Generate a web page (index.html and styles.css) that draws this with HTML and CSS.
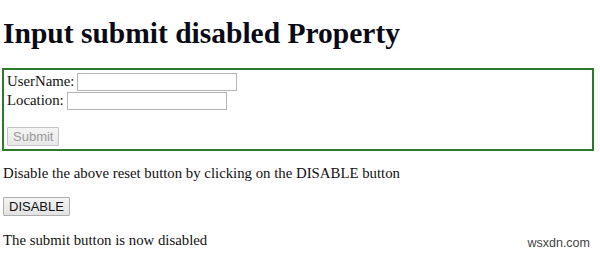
FILE: index.html
```html
<!DOCTYPE html>
<html>
<head>
<meta charset="utf-8">
<link rel="stylesheet" href="styles.css">
</head>
<body>
<h1 class="title">Input submit disabled Property</h1>
<form class="box">
  <div class="row">UserName: <input class="field" type="text"></div>
  <div class="row">Location: <input class="field" type="text"></div>
  <div class="gap"></div>
  <input class="btn btn-disabled" type="submit" value="Submit" disabled>
</form>
<p class="text">Disable the above reset button by clicking on the DISABLE button</p>
<button class="btn" type="button">DISABLE</button>
<p class="text result">The submit button is now disabled</p>
<div class="mark">wsxdn.com</div>
</body>
</html>
```
FILE: styles.css
```css
html {
  margin: 0;
  height: 254px;
  overflow: hidden;
  background: #fff;
}
body {
  margin: 0;
  padding: 0 3px;
  font-family: "Liberation Serif", "Times New Roman", serif;
  font-size: 14.8px;
  color: #111;
  position: relative;
  height: 254px;
  box-sizing: border-box;
  overflow: hidden;
}
.title {
  font-size: 29.5px;
  font-weight: bold;
  margin: 0;
  padding-top: 15px;
  line-height: 36px;
  height: 53px;
  color: #0a0a14;
}
.box {
  border: 2px solid #2c7a2c;
  width: 585px;
  height: 77px;
  margin: 0 0 0 -1px;
  padding: 2px 0 0 3px;
  box-sizing: content-box;
  display: flex;
  flex-direction: column;
  align-items: flex-start;
}
.row {
  height: 19px;
  display: flex;
  align-items: center;
  line-height: 19px;
}
.field {
  width: 154px;
  height: 14px;
  margin: 0 0 0 3px;
  padding: 1px 2px;
  border: 1px solid #b5b5b5;
  background: #fff;
  font-size: 13px;
}
.gap {
  height: 17px;
}
.btn {
  font-family: "Liberation Sans", Arial, sans-serif;
  font-size: 13px;
  height: 19px;
  padding: 0 5px;
  border: 1px solid #adadad;
  border-radius: 1px;
  background: linear-gradient(#f4f4f4, #e2e2e2);
  color: #111;
  line-height: 17px;
}
.btn-disabled {
  color: #9a9a9a;
  border-color: #c4c4c4;
  background: linear-gradient(#f4f4f4, #e8e8e8);
  padding: 0 5px;
}
.text {
  margin: 13px 0 14px 0;
  line-height: 19px;
}
.result {
  margin-top: 15px;
}
.mark {
  position: absolute;
  right: 10px;
  bottom: 4px;
  font-family: "Liberation Sans", Arial, sans-serif;
  font-size: 12.5px;
  color: #444;
}
```
